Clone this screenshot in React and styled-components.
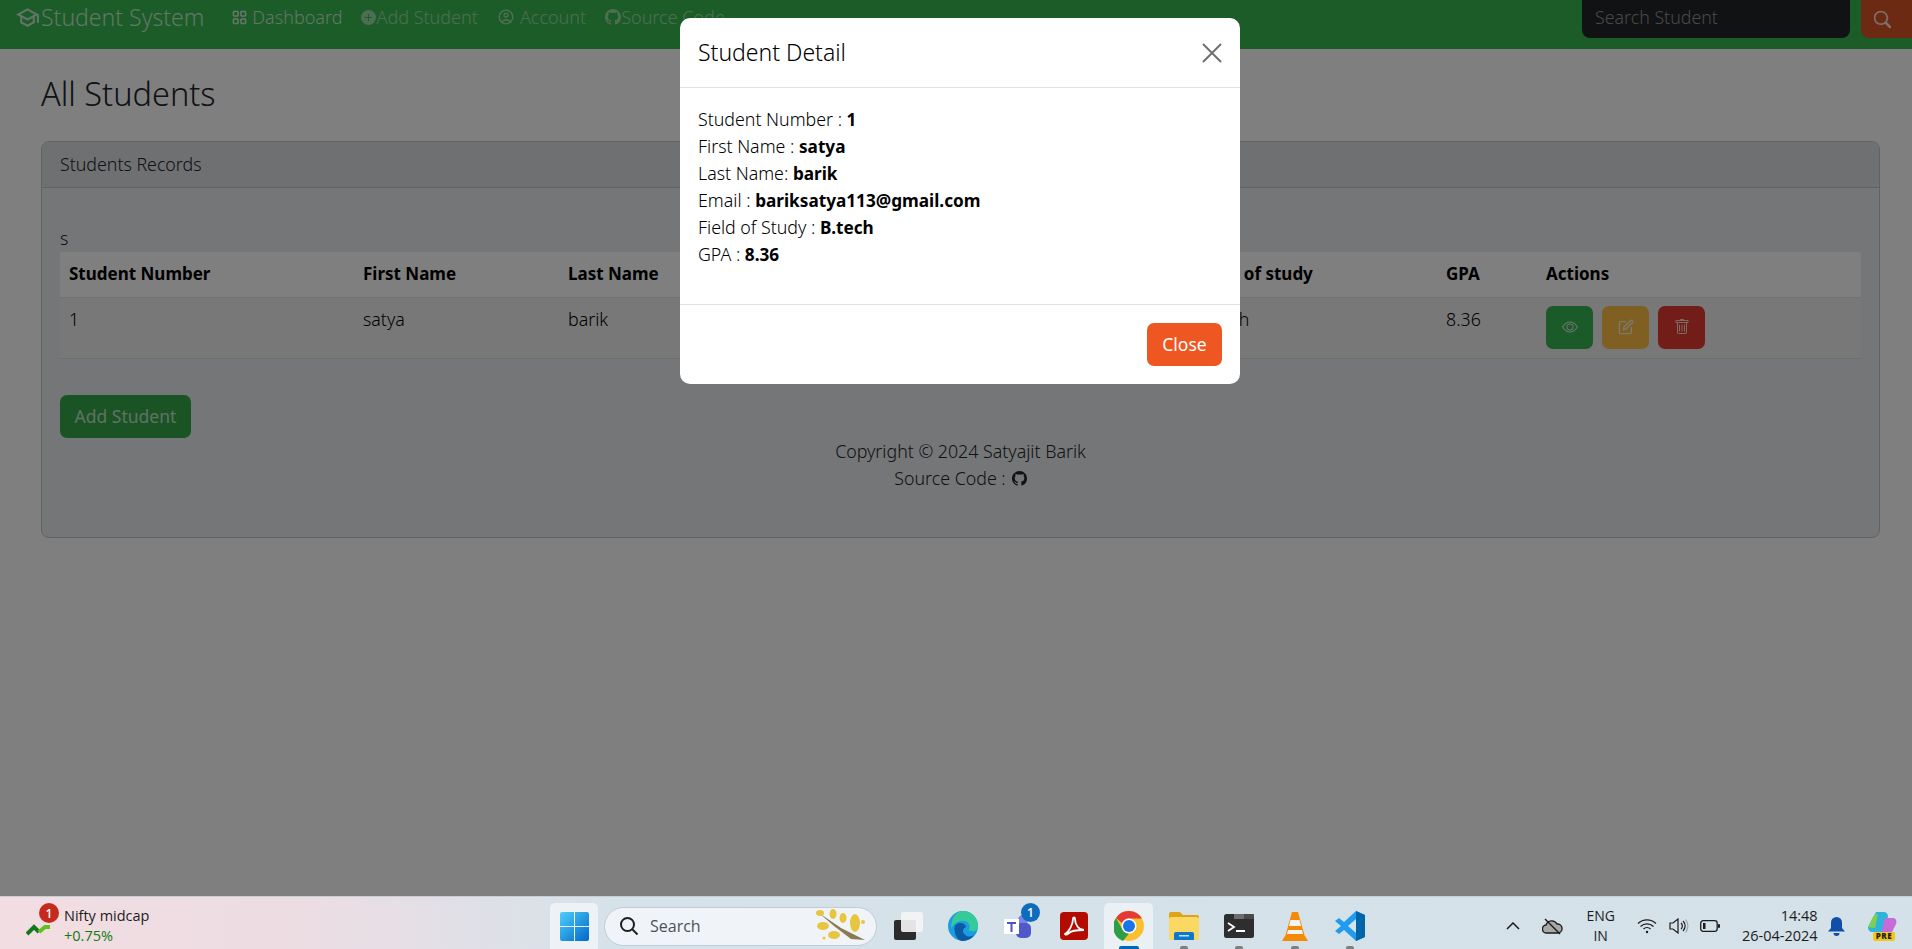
import React from 'react';
import styled, { createGlobalStyle } from 'styled-components';
import { MdOutlineSchool, MdOutlineAccountCircle } from 'react-icons/md';
import { BsGrid, BsPlusCircleFill, BsGithub, BsSearch, BsEye, BsTrash } from 'react-icons/bs';
import { FiEdit } from 'react-icons/fi';

const FONT = '"Noto Sans", "Open Sans", sans-serif';

const GlobalStyle = createGlobalStyle`
  * { box-sizing: border-box; }
  html, body { margin: 0; padding: 0; height: 100%; overflow: hidden; }
  body { font-family: ${FONT}; font-size: 17.8px; font-weight: 300; line-height: 27px; color: #212529; background: #fff; }
  b { font-weight: 700; font-size: 17.2px; }
`;

const Screen = styled.div`
  display: flex;
  flex-direction: column;
  height: 949px;
`;

const Page = styled.div`
  position: relative;
  flex: 0 0 896px;
  overflow: hidden;
  background: #fff;
`;

const Navbar = styled.nav`
  display: flex;
  align-items: flex-start;
  height: 49px;
  padding-left: 15px;
  background: #38b850;
`;

const Brand = styled.div`
  display: flex;
  align-items: center;
  gap: 1px;
  height: 34px;
  font-size: 23px;
  font-weight: 300;
  color: rgba(255, 255, 255, 0.72);
  margin-right: 28px;
`;

const NavItem = styled.div`
  display: flex;
  align-items: center;
  gap: ${(p) => p.$gap || 0}px;
  height: 34px;
  font-size: 18px;
  margin-right: 19px;
  color: rgba(255, 255, 255, ${(p) => (p.$active ? 0.72 : 0.5)});
`;

const SearchForm = styled.div`
  display: flex;
  margin-left: auto;
  gap: 11px;
`;

const SearchInput = styled.div`
  width: 268px;
  height: 38px;
  padding: 4px 13px;
  color: #8f9396;
  background: #212529;
  border-radius: 0 0 8px 8px;
`;

const SearchButton = styled.div`
  display: flex;
  align-items: center;
  justify-content: center;
  width: 51px;
  height: 38px;
  padding-right: 8px;
  color: rgba(255, 255, 255, 0.85);
  background: #d85424;
  border-radius: 0 0 0 8px;
`;

const Main = styled.main`
  padding: 0 32px 0 41px;
`;

const Title = styled.h1`
  margin: 0;
  height: 92px;
  padding-top: 23px;
  font-size: 32.5px;
  line-height: 44px;
  font-weight: 300;
`;

const Card = styled.section`
  height: 397px;
  border: 1px solid #c2c4c6;
  border-radius: 8px;
  background: #ebedef;
  overflow: hidden;
`;

const CardHeader = styled.div`
  height: 46px;
  padding: 9px 18px;
  background: #dfe1e3;
  border-bottom: 1px solid #c2c4c6;
`;

const CardBody = styled.div`
  padding: 37px 18px 0;
`;

const SearchEcho = styled.div`
  height: 27px;
`;

const Table = styled.table`
  width: 100%;
  border-collapse: collapse;
  table-layout: fixed;
`;

const HeadCell = styled.th`
  width: ${(p) => p.$w}px;
  height: 45px;
  padding: 0 9px 2px;
  text-align: left;
  font-size: 17px;
  font-weight: 700;
  color: #000;
  background: #fff;
  border-bottom: 1px solid #e4e4e4;
`;

const BodyCell = styled.td`
  height: 61px;
  padding: 8px 9px 0;
  vertical-align: top;
  color: #000;
  background: #f0f0f0;
  border-bottom: 1px solid #dcdede;
`;

const Actions = styled.div`
  display: flex;
  gap: 9px;
`;

const ActionButton = styled.div`
  display: flex;
  align-items: center;
  justify-content: center;
  width: 47px;
  height: 43px;
  font-size: 16px;
  color: rgba(255, 255, 255, 0.8);
  background: ${(p) => p.$bg};
  border-radius: 7px;
`;

const AddButton = styled.div`
  display: flex;
  align-items: center;
  justify-content: center;
  width: 131px;
  height: 43px;
  margin-top: 36px;
  font-size: 17.5px;
  font-weight: 400;
  color: rgba(255, 255, 255, 0.7);
  background: #34a848;
  border-radius: 7px;
`;

const Footer = styled.footer`
  text-align: center;
  color: #212529;
`;

const SourceLine = styled.div`
  display: flex;
  align-items: center;
  justify-content: center;
  gap: 6px;
`;

const Backdrop = styled.div`
  position: absolute;
  inset: 0;
  display: flex;
  justify-content: center;
  padding: 18px 0 0 8px;
  background: rgba(0, 0, 0, 0.5);
`;

const Modal = styled.div`
  width: 560px;
  height: 366px;
  background: #fff;
  border-radius: 10px;
  color: #000;
`;

const ModalHeader = styled.div`
  display: flex;
  align-items: center;
  justify-content: space-between;
  height: 70px;
  padding: 0 18px;
  border-bottom: 1px solid #dee2e6;
`;

const ModalTitle = styled.div`
  font-size: 23px;
`;

const ModalBody = styled.div`
  height: 217px;
  padding: 18px;
  border-bottom: 1px solid #dee2e6;
`;

const ModalFooter = styled.div`
  display: flex;
  justify-content: flex-end;
  padding: 18px 18px;
`;

const CloseButton = styled.div`
  display: flex;
  align-items: center;
  justify-content: center;
  width: 75px;
  height: 43px;
  font-size: 17.5px;
  font-weight: 400;
  color: #fff;
  background: #ee5722;
  border-radius: 7px;
`;

/* windows taskbar */
const Taskbar = styled.footer`
  display: flex;
  align-items: center;
  flex: 0 0 53px;
  padding-top: 6px;
  border-top: 1px solid #c9ced4;
  background: linear-gradient(90deg, #f2dde2 0%, #ecdde3 16%, #d6e2ea 32%, #d4e1e9 100%);
  font-family: "Open Sans", "Noto Sans", sans-serif;
  font-weight: 400;
  color: #1c1c1c;
`;

const Widget = styled.div`
  position: relative;
  display: flex;
  align-items: center;
  width: 550px;
  height: 100%;
  padding-left: 26px;
`;

const WidgetBadge = styled.span`
  position: absolute;
  left: 39px;
  top: 0;
  display: flex;
  align-items: center;
  justify-content: center;
  width: 20px;
  height: 20px;
  font-size: 12px;
  font-weight: 600;
  color: #fff;
  background: #c42b1c;
  border-radius: 50%;
`;

const WidgetText = styled.div`
  margin-left: 10px;
  margin-top: -1px;
  font-size: 14.5px;
  line-height: 20px;
`;

const WidgetChange = styled.div`
  color: #0f7b0f;
`;

const StartButton = styled.div`
  display: flex;
  align-items: center;
  justify-content: center;
  width: 48px;
  height: 46px;
  background: rgba(255, 255, 255, 0.55);
  border-radius: 5px 5px 0 0;
`;

const SearchPill = styled.div`
  display: flex;
  align-items: center;
  width: 273px;
  height: 39px;
  margin: 0 3px 0 6px;
  padding: 0 8px 0 14px;
  font-size: 16px;
  color: #4d5257;
  background: #f0f4f8;
  border: 1px solid #c4ccd3;
  border-radius: 20px;
`;

const PillLabel = styled.span`
  flex: 1;
  margin-left: 11px;
`;

const AppSlot = styled.div`
  position: relative;
  display: flex;
  align-items: center;
  justify-content: center;
  width: 55.3px;
  height: 46px;

  &::before {
    content: '';
    display: ${(p) => (p.$active ? 'block' : 'none')};
    position: absolute;
    inset: 0 3px;
    background: rgba(255, 255, 255, 0.5);
    border-radius: 5px 5px 0 0;
  }

  & > svg {
    position: relative;
  }
`;

const RunDot = styled.span`
  position: absolute;
  bottom: 0;
  left: 50%;
  width: ${(p) => (p.$active ? 20 : 8)}px;
  height: 3px;
  margin-left: ${(p) => (p.$active ? -10 : -4)}px;
  background: ${(p) => (p.$active ? '#0067c0' : '#7b8085')};
  border-radius: 2px 2px 0 0;
`;

const AppBadge = styled.span`
  position: absolute;
  top: 0;
  right: 6px;
  display: flex;
  align-items: center;
  justify-content: center;
  width: 19px;
  height: 19px;
  font-size: 12px;
  font-weight: 600;
  color: #fff;
  background: #0f6cbd;
  border-radius: 50%;
`;

const Tray = styled.div`
  display: flex;
  align-items: center;
  margin-left: 119px;
`;

const TraySlot = styled.div`
  display: flex;
  align-items: center;
  justify-content: center;
  flex: 0 0 ${(p) => p.$w}px;
`;

const Lang = styled.div`
  flex: 0 0 48px;
  text-align: center;
  font-size: 14px;
  line-height: 20px;
`;

const Clock = styled.div`
  flex: 0 0 87px;
  text-align: right;
  font-size: 14.5px;
  line-height: 20px;
`;

const TrendIcon = () => (
  <svg width="28" height="16" viewBox="0 0 28 16" style={{ marginTop: 8 }}>
    <path d="M1 12l7-7 5 5" fill="none" stroke="#137a1a" strokeWidth="4" />
    <path d="M13 10l6-5 5 0" fill="none" stroke="#5fc21e" strokeWidth="4" />
  </svg>
);

const WindowsIcon = () => (
  <svg width="29" height="29" viewBox="0 0 29 29">
    <defs>
      <linearGradient id="win" x1="0" y1="0" x2="1" y2="1">
        <stop offset="0" stopColor="#4fd0fb" />
        <stop offset="1" stopColor="#0067c8" />
      </linearGradient>
    </defs>
    <path fill="url(#win)" d="M2 0h12v14H0V2a2 2 0 0 1 2-2zm13 0h12a2 2 0 0 1 2 2v12H15zM0 15h14v14H2a2 2 0 0 1-2-2zm15 0h14v12a2 2 0 0 1-2 2H15z" />
  </svg>
);

const GlassIcon = () => (
  <svg width="20" height="20" viewBox="0 0 20 20" fill="none" stroke="#1f1f1f" strokeWidth="2">
    <circle cx="8.5" cy="8.5" r="6.5" />
    <path d="M13.5 13.5l5 5" />
  </svg>
);

const BlossomIcon = () => (
  <svg width="52" height="36" viewBox="0 0 52 36">
    <path d="M3 5l22 15 24 12-14-1L18 18z" fill="#8b7a50" />
    <g fill="#e8c53e">
      <ellipse cx="7" cy="18" rx="6" ry="4" />
      <ellipse cx="4" cy="5" rx="4" ry="3" />
      <ellipse cx="17" cy="6" rx="3.5" ry="5" />
      <ellipse cx="27" cy="10" rx="3.5" ry="5" />
      <ellipse cx="39" cy="15" rx="5" ry="9" />
      <ellipse cx="18" cy="27" rx="6" ry="4" />
      <circle cx="47" cy="14" r="2" />
      <circle cx="8" cy="30" r="1.5" />
    </g>
  </svg>
);

const TaskViewIcon = () => (
  <svg width="30" height="30" viewBox="0 0 30 30">
    <rect x="1" y="9" width="22" height="20" rx="2" fill="#2c2c2c" />
    <rect x="8" y="1" width="22" height="20" rx="2" fill="#f4f4f4" opacity=".92" />
  </svg>
);

const EdgeIcon = () => (
  <svg width="30" height="30" viewBox="0 0 28 28">
    <circle cx="14" cy="14" r="14" fill="#1b9de2" />
    <path d="M14 0a14 14 0 0 1 14 15c0 4-5 5-9 3 3-4 0-9-5-9S5 12 3 16C3 7 7 0 14 0z" fill="#36c99a" />
    <path d="M6 16c0-5 9-7 11-1-3 1-5 5 0 8 3 2 7 0 8-1-3 4-7 6-11 6-5 0-8-6-8-12z" fill="#0c59a4" />
  </svg>
);

const TeamsIcon = () => (
  <svg width="30" height="28" viewBox="0 0 30 28">
    <circle cx="20" cy="8" r="5" fill="#7b83eb" />
    <rect x="13" y="11" width="15" height="15" rx="5" fill="#5059c9" />
    <rect x="1" y="7" width="15" height="15" fill="#fff" />
    <path d="M4 10h9v2H9.5v8h-2v-8H4z" fill="#4b53bc" />
  </svg>
);

const AcrobatIcon = () => (
  <svg width="28" height="28" viewBox="0 0 28 28">
    <rect width="28" height="28" rx="4" fill="#b30b00" />
    <path d="M5 22c4-2 8-10 8-15 0-2 2-2 2 0 0 6 4 11 9 11-6 0-13 1-15 3-2 2-4 2-4 1z" fill="none" stroke="#fff" strokeWidth="1.8" />
  </svg>
);

const ChromeIcon = () => (
  <svg width="30" height="30" viewBox="0 0 30 30">
    <circle cx="15" cy="15" r="15" fill="#fbc02d" />
    <path d="M15 0a15 15 0 0 1 13 7.5H15a7.5 7.5 0 0 0-7 4.5L2 7a15 15 0 0 1 13-7z" fill="#e53935" />
    <path d="M2 7l6.5 11.500A7.5 7.5 0 0 0 15 22.5L9 30A15 15 0 0 1 2 7z" fill="#2e9e46" />
    <circle cx="15" cy="15" r="7.5" fill="#fff" />
    <circle cx="15" cy="15" r="6" fill="#1a73e8" />
  </svg>
);

const FolderIcon = () => (
  <svg width="30" height="28" viewBox="0 0 30 28">
    <path d="M0 2a2 2 0 0 1 2-2h9l3 3h14a2 2 0 0 1 2 2v4H0z" fill="#dda515" />
    <rect y="5" width="30" height="23" rx="2" fill="#fbd764" />
    <path d="M5 28v-6a2 2 0 0 1 2-2h16a2 2 0 0 1 2 2v6z" fill="#0f78c8" />
    <rect x="10" y="23" width="10" height="1.5" fill="#bfe3f7" />
  </svg>
);

const TerminalIcon = () => (
  <svg width="30" height="24" viewBox="0 0 30 24">
    <rect width="30" height="24" rx="2.5" fill="#2e2e2e" />
    <rect x="10" width="10" height="5" fill="#6d6d6d" />
    <rect x="20" width="10" height="5" rx="1" fill="#4a4a4a" />
    <path d="M4 9l6 4-6 4" fill="none" stroke="#fff" strokeWidth="1.8" />
    <rect x="12" y="16" width="9" height="2" fill="#fff" />
  </svg>
);

const VlcIcon = () => (
  <svg width="26" height="30" viewBox="0 0 26 30">
    <path d="M10 1h6l7 25H3z" fill="#f58a07" />
    <path d="M8.5 9h9l1.5 6H7zM6 19h14l1 4H5z" fill="#f4f4f4" />
    <path d="M0 30l3-5h20l3 5z" fill="#f58a07" />
  </svg>
);

const VsCodeIcon = () => (
  <svg width="30" height="30" viewBox="0 0 30 30">
    <path d="M21 0l9 4v22l-9 4-12-11-5 4-4-3 6-5-6-5 4-3 5 4z" fill="#1f9cf0" />
    <path d="M21 0l9 4v22l-9 4z" fill="#0065a9" />
    <path d="M21 8l-8 7 8 7z" fill="#d6e2ea" />
  </svg>
);

const ChevronIcon = () => (
  <svg width="14" height="8" viewBox="0 0 14 8" fill="none" stroke="#1c1c1c" strokeWidth="1.5">
    <path d="M1 7l6-6 6 6" />
  </svg>
);

const CloudOffIcon = () => (
  <svg width="21" height="17" viewBox="0 0 21 17" fill="none" stroke="#1c1c1c" strokeWidth="1.4">
    <path d="M5 15a4 4 0 0 1-1-8 6 6 0 0 1 11-1 4.5 4.5 0 0 1 1 9z" fill="#a8a8a8" />
    <path d="M3 1l15 15" />
  </svg>
);

const WifiIcon = () => (
  <svg width="20" height="16" viewBox="0 0 20 16" fill="none" stroke="#1c1c1c" strokeWidth="1.3">
    <path d="M1 5.5a13 13 0 0 1 18 0M3.5 8.5a9.5 9.5 0 0 1 13 0M6.5 11a5 5 0 0 1 7 0" />
    <circle cx="10" cy="14" r="1.2" fill="#1c1c1c" stroke="none" />
  </svg>
);

const VolumeIcon = () => (
  <svg width="20" height="16" viewBox="0 0 20 16" fill="none" stroke="#1c1c1c" strokeWidth="1.2">
    <path d="M1 5h3l5-4v14l-5-4H1z" />
    <path d="M12 5a4 4 0 0 1 0 6M14 3a7 7 0 0 1 0 10" />
    <path d="M16.5 1.5a10 10 0 0 1 0 13" stroke="#a5a9ad" />
  </svg>
);

const BatteryIcon = () => (
  <svg width="20" height="12" viewBox="0 0 20 12">
    <rect x=".7" y=".7" width="16.5" height="10.6" rx="2.5" fill="none" stroke="#1c1c1c" strokeWidth="1.3" />
    <rect x="3" y="3" width="2.5" height="6" fill="#1c1c1c" />
    <rect x="18" y="4" width="2" height="4" rx="1" fill="#1c1c1c" />
  </svg>
);

const BellIcon = () => (
  <svg width="17" height="19" viewBox="0 0 17 19">
    <path d="M8.5 0a5.5 5.5 0 0 1 5.5 5.5V11l3 3.5H0L3 11V5.5A5.5 5.5 0 0 1 8.5 0z" fill="#0f4fa8" />
    <path d="M5.5 16h6a3 3 0 0 1-6 0z" fill="#0f4fa8" />
  </svg>
);

const CopilotIcon = () => (
  <svg width="30" height="30" viewBox="0 0 30 30">
    <path d="M9 1h8c3 0 4 3 4 5l-6 15H5c-3 0-4-3-4-5z" fill="#2fb4d9" />
    <path d="M1 16l5-10c1-2 3-3 5-3l-3 14z" fill="#7ed04f" />
    <path d="M18 7h8c3 0 4 3 3 6l-4 8c-1 2-3 3-5 3h-6z" fill="#c86ad8" />
    <rect x="6" y="21" width="22" height="9" rx="2" fill="#f5c518" />
  </svg>
);

const CopilotText = styled.span`
  position: absolute;
  bottom: 0;
  left: 9px;
  font-size: 8px;
  line-height: 10px;
  font-weight: 800;
  letter-spacing: 0.5px;
  color: #222;
`;

const CopilotWrap = styled.div`
  position: relative;
  display: flex;
  flex: 0 0 30px;
  margin-left: 11px;
`;

const CloseX = () => (
  <svg width="20" height="20" viewBox="0 0 20 20" stroke="#707070" strokeWidth="2">
    <path d="M1 1l18 18M19 1L1 19" />
  </svg>
);

const columns = [
  ['Student Number', 294],
  ['First Name', 205],
  ['Last Name', 209],
  ['Email', 422],
  ['Field of study', 247],
  ['GPA', 100],
  ['Actions', 324],
];

const details = [
  ['Student Number : ', '1'],
  ['First Name : ', 'satya'],
  ['Last Name: ', 'barik'],
  ['Email : ', 'bariksatya113@gmail.com'],
  ['Field of Study : ', 'B.tech'],
  ['GPA : ', '8.36'],
];

const apps = [
  { icon: <TaskViewIcon /> },
  { icon: <EdgeIcon /> },
  { icon: <TeamsIcon />, badge: '1' },
  { icon: <AcrobatIcon /> },
  { icon: <ChromeIcon />, active: true },
  { icon: <FolderIcon />, running: true },
  { icon: <TerminalIcon />, running: true },
  { icon: <VlcIcon />, running: true },
  { icon: <VsCodeIcon />, running: true },
];

const App = () => (
  <Screen>
    <GlobalStyle />
    <Page>
      <Navbar>
        <Brand><MdOutlineSchool size={25} />Student System</Brand>
        <NavItem $active $gap={5}><BsGrid size={15} stroke="currentColor" strokeWidth={0.6} />Dashboard</NavItem>
        <NavItem><BsPlusCircleFill size={15} />Add Student</NavItem>
        <NavItem $gap={5}><MdOutlineAccountCircle size={18} />Account</NavItem>
        <NavItem><BsGithub size={16} />Source Code</NavItem>
        <SearchForm>
          <SearchInput>Search Student</SearchInput>
          <SearchButton><BsSearch size={17} stroke="currentColor" strokeWidth={0.5} /></SearchButton>
        </SearchForm>
      </Navbar>
      <Main>
        <Title>All Students</Title>
        <Card>
          <CardHeader>Students Records</CardHeader>
          <CardBody>
            <SearchEcho>s</SearchEcho>
            <Table>
              <thead>
                <tr>
                  {columns.map(([name, w]) => <HeadCell key={name} $w={w}>{name}</HeadCell>)}
                </tr>
              </thead>
              <tbody>
                <tr>
                  <BodyCell>1</BodyCell>
                  <BodyCell>satya</BodyCell>
                  <BodyCell>barik</BodyCell>
                  <BodyCell>bariksatya113@gmail.com</BodyCell>
                  <BodyCell>B.tech</BodyCell>
                  <BodyCell>8.36</BodyCell>
                  <BodyCell>
                    <Actions>
                      <ActionButton $bg="#36b452"><BsEye /></ActionButton>
                      <ActionButton $bg="#febe44"><FiEdit /></ActionButton>
                      <ActionButton $bg="#e63a30"><BsTrash /></ActionButton>
                    </Actions>
                  </BodyCell>
                </tr>
              </tbody>
            </Table>
            <AddButton>Add Student</AddButton>
            <Footer>
              <div>Copyright © 2024 Satyajit Barik</div>
              <SourceLine>Source Code : <BsGithub size={15} /></SourceLine>
            </Footer>
          </CardBody>
        </Card>
      </Main>
      <Backdrop>
        <Modal>
          <ModalHeader>
            <ModalTitle>Student Detail</ModalTitle>
            <CloseX />
          </ModalHeader>
          <ModalBody>
            {details.map(([label, value]) => (
              <div key={label}>{label}<b>{value}</b></div>
            ))}
          </ModalBody>
          <ModalFooter>
            <CloseButton>Close</CloseButton>
          </ModalFooter>
        </Modal>
      </Backdrop>
    </Page>
    <Taskbar>
      <Widget>
        <TrendIcon />
        <WidgetBadge>1</WidgetBadge>
        <WidgetText>
          Nifty midcap
          <WidgetChange>+0.75%</WidgetChange>
        </WidgetText>
      </Widget>
      <StartButton><WindowsIcon /></StartButton>
      <SearchPill>
        <GlassIcon />
        <PillLabel>Search</PillLabel>
        <BlossomIcon />
      </SearchPill>
      {apps.map((app, i) => (
        <AppSlot key={i} $active={app.active}>
          {app.icon}
          {app.badge && <AppBadge>{app.badge}</AppBadge>}
          {(app.active || app.running) && <RunDot $active={app.active} />}
        </AppSlot>
      ))}
      <Tray>
        <TraySlot $w={32}><ChevronIcon /></TraySlot>
        <TraySlot $w={48}><CloudOffIcon /></TraySlot>
        <Lang>ENG<br />IN</Lang>
        <TraySlot $w={44}><WifiIcon /></TraySlot>
        <TraySlot $w={18}><VolumeIcon /></TraySlot>
        <TraySlot $w={42}><BatteryIcon /></TraySlot>
        <Clock>14:48<br />26-04-2024</Clock>
        <TraySlot $w={38}><BellIcon /></TraySlot>
        <CopilotWrap>
          <CopilotIcon />
          <CopilotText>PRE</CopilotText>
        </CopilotWrap>
      </Tray>
    </Taskbar>
  </Screen>
);

export default App;
